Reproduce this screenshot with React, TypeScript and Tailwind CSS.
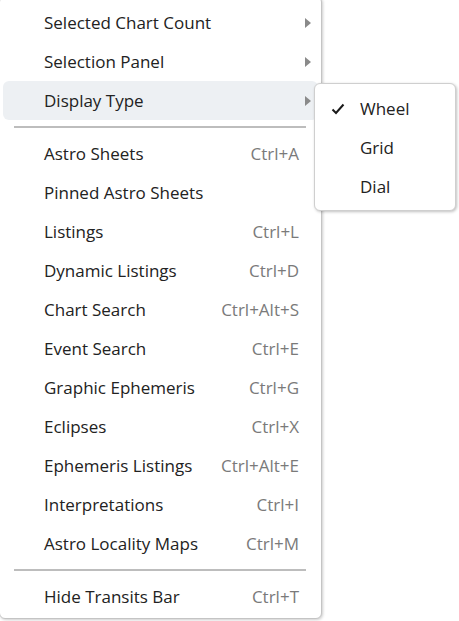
import React from 'react';

type Entry =
  | { kind: 'item'; label: string; shortcut?: string; submenu?: boolean; active?: boolean }
  | { kind: 'separator' };

const entries: Entry[] = [
  { kind: 'item', label: 'Selected Chart Count', submenu: true },
  { kind: 'item', label: 'Selection Panel', submenu: true },
  { kind: 'item', label: 'Display Type', submenu: true, active: true },
  { kind: 'separator' },
  { kind: 'item', label: 'Astro Sheets', shortcut: 'Ctrl+A' },
  { kind: 'item', label: 'Pinned Astro Sheets' },
  { kind: 'item', label: 'Listings', shortcut: 'Ctrl+L' },
  { kind: 'item', label: 'Dynamic Listings', shortcut: 'Ctrl+D' },
  { kind: 'item', label: 'Chart Search', shortcut: 'Ctrl+Alt+S' },
  { kind: 'item', label: 'Event Search', shortcut: 'Ctrl+E' },
  { kind: 'item', label: 'Graphic Ephemeris', shortcut: 'Ctrl+G' },
  { kind: 'item', label: 'Eclipses', shortcut: 'Ctrl+X' },
  { kind: 'item', label: 'Ephemeris Listings', shortcut: 'Ctrl+Alt+E' },
  { kind: 'item', label: 'Interpretations', shortcut: 'Ctrl+I' },
  { kind: 'item', label: 'Astro Locality Maps', shortcut: 'Ctrl+M' },
  { kind: 'separator' },
  { kind: 'item', label: 'Hide Transits Bar', shortcut: 'Ctrl+T' },
];

const displayTypes = [
  { label: 'Wheel', checked: true },
  { label: 'Grid' },
  { label: 'Dial' },
];

function Arrow() {
  return (
    <svg width="6" height="10" viewBox="0 0 6 10" className="shrink-0">
      <path d="M0 0 L6 5 L0 10 Z" fill="#8a8a8a" />
    </svg>
  );
}

function Check() {
  return (
    <svg width="14" height="12" viewBox="0 0 14 12">
      <path d="M1.5 6.5 L5 10 L12.5 1.5" fill="none" stroke="#1a1a1a" strokeWidth="2" />
    </svg>
  );
}

function SubMenu() {
  return (
    <div className="absolute left-[314px] top-[83px] w-[142px] bg-white border border-[#cfcfcf] rounded-md shadow-[1px_1px_3px_rgba(0,0,0,0.25)] pt-[5px] pb-[4px]">
      {displayTypes.map((t) => (
        <div key={t.label} className="h-[39px] flex items-center">
          <div className="w-[45px] pl-[16px] flex">{t.checked && <Check />}</div>
          <span className="text-[#222222]">{t.label}</span>
        </div>
      ))}
    </div>
  );
}

export default function App() {
  return (
    <div
      className="relative w-[459px] h-[621px] bg-white overflow-hidden text-[17px]"
      style={{ fontFamily: '"Open Sans", "Noto Sans", sans-serif' }}
    >
      <div className="-ml-px -mt-[4px] w-[323px] bg-white border border-[#c4c4c4] rounded-md shadow-[1px_1px_3px_rgba(0,0,0,0.2)] pt-[6px] pb-[2px]">
        {entries.map((e, i) =>
          e.kind === 'separator' ? (
            <div key={i} className="py-[6px] pl-[14px] pr-[15px]">
              <div className="h-[2px] bg-[#bdbdbd]" />
            </div>
          ) : (
            <div
              key={i}
              className={`mx-[3px] h-[39px] flex items-center rounded-md pl-[41px] pr-[7px] ${
                e.active ? 'bg-[#edf0f3]' : ''
              }`}
            >
              <span className="flex-1 text-[#222222] whitespace-nowrap">{e.label}</span>
              {e.shortcut && (
                <span className="text-[#7a7a7a] whitespace-nowrap mr-[12px]">{e.shortcut}</span>
              )}
              {e.submenu && <Arrow />}
            </div>
          )
        )}
      </div>
      <SubMenu />
    </div>
  );
}
